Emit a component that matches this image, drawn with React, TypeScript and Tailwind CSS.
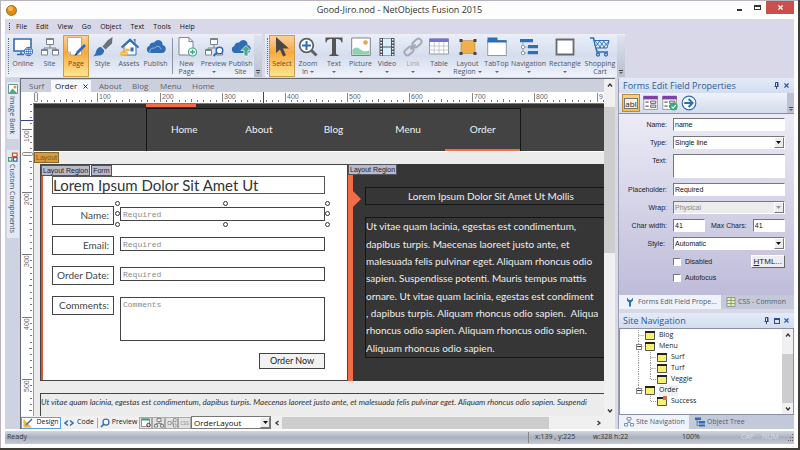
import type { ReactNode } from 'react';
import { X } from 'lucide-react';

const BLUE = '#2f6db5';
const GRAY = '#7d838c';

/* ---------- icons ---------- */

function Icon({ children, size = 20 }: { children: ReactNode; size?: number }) {
  return (
    <svg width={size} height={size} viewBox="0 0 20 20" fill="none" className="shrink-0" aria-hidden="true">
      {children}
    </svg>
  );
}

function Cloud() {
  return (
    <path
      d="M4 16a3.6 3.6 0 0 1-.6-7C3.600 6.500 6 5 8.200 5.600 9.500 3 12.500 2.200 14.700 3.800c1.600 1.100 2 2.700 1.800 4.200C18.500 8.300 19.800 9.800 19.800 12c0 2.200-1.600 4-3.800 4Z"
      fill={BLUE}
    />
  );
}

function SiteBoxes() {
  return (
    <g stroke={GRAY}>
      <path d="M10 7v4M4 13v-2h12v2" strokeWidth="1" />
      <path d="M6.500 1.500h7v6h-7zM1.500 12.500h6v5.500h-6zM12.500 12.500h6v5.500h-6z" fill="#fff" />
      <path d="M6.500 2.300h7M1.500 13.300h6M12.500 13.300h6" strokeWidth="1.500" />
    </g>
  );
}

const icons = {
  online: (
    <Icon>
      <path d="M1 2h17v12H1z" fill="#fff" stroke={BLUE} strokeWidth="1.600" />
      <path d="M4 17.500h7M8 15v2" stroke={BLUE} strokeWidth="1.500" />
      <circle cx="15.500" cy="14.500" r="4.200" fill="#fff" stroke={BLUE} />
      <path d="M11.500 14.500h8M15.500 10.500v8M12.300 12.500h6.400M12.300 16.500h6.400" stroke={BLUE} strokeWidth=".7" />
      <ellipse cx="15.500" cy="14.500" rx="2" ry="4" stroke={BLUE} strokeWidth=".7" />
    </Icon>
  ),
  site: (
    <Icon>
      <SiteBoxes />
    </Icon>
  ),
  page: (
    <Icon>
      <path d="M1.500.500h14V18h-11l-3-3z" fill="#fff" stroke="#a59b86" strokeWidth=".8" />
      <path d="M1.500 15h3v3" stroke="#a59b86" strokeWidth=".8" />
      <path d="m9.500 18 1-3.500L18 7l2 2-7.500 7.500z" fill={BLUE} />
      <path d="m8.500 19 1.500-3 1.500 1.500z" fill="#333" />
    </Icon>
  ),
  style: (
    <Icon>
      <path d="M19.500 0 19 6.500l-6.500 6-3-3L15 3z" fill="#6d7177" />
      <path d="m8 10 3 3c.5 3-2 5.500-5 5.500-2 0-4 .5-6 1 2-1.500 2.500-3 3-5C3.600 12 5.500 10 8 10Z" fill={BLUE} />
    </Icon>
  ),
  assets: (
    <Icon>
      <path d="M5 9.500 11 4l6 5.500V18H5z" fill="#fff" stroke={BLUE} />
      <path d="M14.500 2h2v5" fill={BLUE} />
      <path d="m2.500 10.500 8.500-8 8.500 8" stroke={BLUE} strokeWidth="1.800" />
      <path d="M11.500 10.500h3v4h-3z" fill={BLUE} />
      <ellipse cx="7.500" cy="13" rx="3.500" ry="1.400" fill="#f0bb57" />
      <path d="M1 15.500c0-1.500 8-1.500 8 0v2.200c0 1.600-8 1.600-8 0z" fill="#eeb04a" />
      <path d="M1 15.800c1.500 1.200 6.500 1.200 8 0" stroke="#fff0cc" strokeWidth=".6" />
    </Icon>
  ),
  publish: (
    <Icon>
      <Cloud />
      <path d="M4 16c-1-3 1.500-5.500 4.500-4.800 2-3 6-2 6.500 1" stroke="#fff" strokeWidth=".5" />
    </Icon>
  ),
  newPage: (
    <Icon>
      <path d="M2 .600h10l4 4V18H2z" fill="#fff" stroke={GRAY} />
      <path d="M12 .600v4h4" stroke={GRAY} />
      <circle cx="15.500" cy="15" r="4" fill="#fff" stroke="#45a782" strokeWidth="1.200" />
      <path d="M15.500 12.500v5M13 15h5" stroke="#45a782" strokeWidth="1.500" />
    </Icon>
  ),
  preview: (
    <Icon>
      <SiteBoxes />
      <path d="m9.500 19 4-4" stroke={BLUE} strokeWidth="2" />
      <circle cx="15.500" cy="13.500" r="3.300" fill="#fff" stroke={BLUE} strokeWidth="1.500" />
    </Icon>
  ),
  publishSite: (
    <Icon>
      <Cloud />
      <path d="m15 8.500 5 5h-3V19h-4v-5.500h-3z" fill="#4cab8c" stroke="#fff" strokeWidth=".7" />
    </Icon>
  ),
  select: (
    <Icon>
      <path d="M4 0v16l4-3.500 3 7 3-1.300-3-6.700h6z" fill="#484848" />
    </Icon>
  ),
  zoomIn: (
    <Icon>
      <path d="m13 13 5.500 5.500" stroke="#5d6168" strokeWidth="3" />
      <circle cx="8.500" cy="8.500" r="6.800" fill="#fff" stroke="#5d6168" strokeWidth="1.800" />
      <path d="M8.500 4v9M4 8.500h9" stroke={BLUE} strokeWidth="2" />
    </Icon>
  ),
  text: (
    <Icon>
      <path d="M1.500.500h17v5h-1c-.7-2.700-1.500-3.500-5.500-3.500v14c0 1.500 1 1.800 2.500 2v1h-9v-1c1.500-.2 2.500-.5 2.500-2V2C4 2 3.200 2.800 2.500 5.500h-1z" fill="#555" />
    </Icon>
  ),
  picture: (
    <Icon>
      <path d="M.700 1h18.600v17.500H.700z" fill="#fff" stroke={GRAY} />
      <circle cx="14.500" cy="5.500" r="2.300" fill="#e9a64a" />
      <path d="M1.500 13c3-3.500 5-3 8-.5s5 2 9 1v4.300h-17z" fill="#8fd0b0" />
    </Icon>
  ),
  video: (
    <Icon>
      <path d="M2.500 1h15v18h-15z" fill="#4e5258" />
      <path d="M6 1.500h8v8H6zM6 10.500h8v8H6z" fill="#d9effb" />
      <path d="M4.200 2v17M15.800 2v17" stroke="#fff" strokeWidth="1.500" strokeDasharray="1.500 1.500" />
    </Icon>
  ),
  link: (
    <Icon>
      <g stroke="#a7a8b8" strokeWidth="2">
        <rect x="9" y="3" width="10" height="6" rx="3" transform="rotate(-42 14 6)" />
        <rect x="1" y="11" width="10" height="6" rx="3" transform="rotate(-42 6 14)" />
        <path d="m7.500 12.500 5-5" />
      </g>
    </Icon>
  ),
  table: (
    <Icon>
      <path d="M.500 2h19v15H.500z" fill="#fff" stroke={GRAY} strokeWidth=".8" />
      <path d="M.500 1.500h19V5H.500z" fill="#7472c9" />
      <path d="M.500 9h19M.500 13h19M5.300 5v12M10 5v12M14.700 5v12" stroke="#b9bac9" strokeWidth=".8" />
    </Icon>
  ),
  region: (
    <Icon>
      <path d="M3 3.500h14v13H3z" fill="#eeb04f" stroke="#b3894a" strokeWidth=".6" />
      <path d="M1.500 2h3v3h-3zM15.500 2h3v3h-3zM1.500 15h3v3h-3zM15.500 15h3v3h-3z" fill="#444" />
    </Icon>
  ),
  tabTop: (
    <Icon>
      <path d="M.700 3.500h18.600v15H.700z" fill="#fff" stroke={GRAY} strokeWidth=".8" />
      <path d="M.500.500h10v2.700h9v2.300H.500z" fill={BLUE} />
    </Icon>
  ),
  navigation: (
    <Icon>
      <path d="M4 5v12M4 10h5M4 16h5" stroke="#8aa" strokeWidth=".8" />
      <path d="M1 2h13v3.200H1zM9 8h10v3.200H9zM9 14h10v3.200H9z" fill={BLUE} />
      <circle cx="4" cy="10" r="1.700" fill="#fff" stroke={GRAY} strokeWidth=".8" />
      <circle cx="4" cy="16" r="1.700" fill="#fff" stroke={GRAY} strokeWidth=".8" />
    </Icon>
  ),
  rectangle: (
    <Icon>
      <path d="M1.500 2.500h17v15h-17z" fill="#fff" stroke="#666a70" strokeWidth="1.800" />
    </Icon>
  ),
  cart: (
    <Icon>
      <path d="M0 1h3.500L7 15h11" stroke={BLUE} strokeWidth="1.600" />
      <path d="M4 3.500h15L17 11H6z" fill="#dfeaf8" stroke={BLUE} />
      <path d="m5 4 6 7m-2-7.500 6 7.500M13 3.500l4 5M10 3.500 6 9m8.500-5.500L9 11m10-7-6 7" stroke={BLUE} strokeWidth=".9" />
      <circle cx="8" cy="17.500" r="1.500" stroke={BLUE} strokeWidth="1.300" />
      <circle cx="16" cy="17.500" r="1.500" stroke={BLUE} strokeWidth="1.300" />
    </Icon>
  ),
};

function Caret() {
  return (
    <svg width="4" height="2" viewBox="0 0 4 2" aria-hidden="true">
      <path d="M0 0h4L2 2z" fill="#666" />
    </svg>
  );
}

/* ---------- toolbar ---------- */

interface Tool {
  label: string;
  second?: string;
  icon: ReactNode;
  width: string;
  active?: boolean;
  menu?: boolean;
  disabled?: boolean;
}

const mainTools: Tool[] = [
  { label: 'Online', icon: icons.online, width: 'w-[26px]' },
  { label: 'Site', icon: icons.site, width: 'w-[27px]' },
  { label: 'Page', icon: icons.page, width: 'w-[26px]', active: true },
  { label: 'Style', icon: icons.style, width: 'w-[27px]' },
  { label: 'Assets', icon: icons.assets, width: 'w-[26px]' },
  { label: 'Publish', icon: icons.publish, width: 'w-[27px]' },
];

const pageTools: Tool[] = [
  { label: 'New', second: 'Page', icon: icons.newPage, width: 'w-[27px]' },
  { label: 'Preview', icon: icons.preview, width: 'w-[27px]', menu: true },
  { label: 'Publish', second: 'Site', icon: icons.publishSite, width: 'w-[27px]' },
];

const objectTools: Tool[] = [
  { label: 'Select', icon: icons.select, width: 'w-[26px]', active: true },
  { label: 'Zoom', second: 'In', icon: icons.zoomIn, width: 'w-[26px]', menu: true },
  { label: 'Text', icon: icons.text, width: 'w-[26px]', menu: true },
  { label: 'Picture', icon: icons.picture, width: 'w-[27px]', menu: true },
  { label: 'Video', icon: icons.video, width: 'w-[26px]', menu: true },
  { label: 'Link', icon: icons.link, width: 'w-[26px]', menu: true, disabled: true },
  { label: 'Table', icon: icons.table, width: 'w-[26px]', menu: true },
  { label: 'Layout', second: 'Region', icon: icons.region, width: 'w-[31px]', menu: true },
  { label: 'TabTop', icon: icons.tabTop, width: 'w-[27px]', menu: true },
  { label: 'Navigation', icon: icons.navigation, width: 'w-[37px]', menu: true },
  { label: 'Rectangle', icon: icons.rectangle, width: 'w-[36px]', menu: true },
  { label: 'Shopping', second: 'Cart', icon: icons.cart, width: 'w-[34px]' },
];

function ToolButton({ tool }: { tool: Tool }) {
  return (
    <button
      disabled={tool.disabled}
      className={`${tool.width} flex flex-col items-center whitespace-nowrap border pt-px text-[7px] leading-[8px] ${
        tool.active
          ? 'border-[#c79c4e] bg-linear-to-b from-[#fbd09a] via-[#f9a83a] via-40% to-[#fde58c] text-[#5d4a2c]'
          : 'border-transparent'
      } ${tool.disabled ? 'text-[#a3a4b2]' : 'text-[#4f5566]'}`}
    >
      {tool.icon}
      <span className="mt-[3px]">{tool.label}</span>
      <span className="flex h-[8px] items-center gap-[2px]">
        {tool.second}
        {tool.menu && <Caret />}
      </span>
    </button>
  );
}

function Toolbar({ label, children }: { label: string; children: ReactNode }) {
  return (
    <div
      role="toolbar"
      aria-label={label}
      className="flex h-[43px] border-t border-[#eeeef6] bg-linear-to-b from-[#e9eef8] via-[#d5dded] via-50% to-[#eef2fb]"
    >
      <div className="my-[3px] ml-[2px] mr-px w-px border-l border-dotted border-[#6b7080]" />
      {children}
      <button aria-label="Toolbar options" className="flex w-[8px] flex-col items-center justify-end gap-px bg-linear-to-b from-[#dfe3ef] to-[#b9bfd0] pb-[3px]">
        <span className="h-px w-[4px] bg-[#444]" />
        <Caret />
      </button>
    </div>
  );
}

/* ---------- rulers ---------- */

const STEP = 6.24;
const rulerText = "font-['Liberation_Sans'] text-[7px]";

function HorizontalRuler() {
  const ticks = Array.from({ length: 110 }, (_, i) => i);
  return (
    <svg width="100%" height="11" className="block bg-white" aria-hidden="true">
      {ticks.map((i) => {
        const x = Math.round(2 + i * STEP);
        const top = i % 10 === 0 ? 1 : i % 5 === 0 ? 7 : 8;
        return <path key={i} d={`M${x + 0.5} ${top}V10`} stroke={i % 10 === 0 ? '#8a8a8a' : '#777'} />;
      })}
      {['100', '200', '300', '400', '500', '600', '700', '800', '9'].map((value, i) => (
        <text key={value} x={Math.round(4 + (i + 1) * 10 * STEP)} y="7" className={rulerText} fill="#666">
          {value}
        </text>
      ))}
      <rect x="1.500" y=".500" width="3" height="9" rx="1" fill="#f4f4f4" stroke="#888" />
      <path d="M230.500 0v11" stroke="#3d3f86" />
    </svg>
  );
}

function VerticalRuler() {
  const ticks = Array.from({ length: 90 }, (_, i) => i);
  return (
    <svg width="13" height="100%" className="block bg-white" aria-hidden="true">
      {ticks.map((i) => {
        const y = Math.round(i * STEP) - 37;
        const left = i % 10 === 0 ? 1 : i % 5 === 0 ? 8 : 9;
        return <path key={i} d={`M${left} ${y + 0.5}H11`} stroke="#777" />;
      })}
      {[1, 2, 3, 4, 5].map((n) => (
        <text key={n} transform={`translate(8 ${Math.round(n * 10 * STEP) - 24}) rotate(-90)`} className={rulerText} fill="#666">
          {n * 100}
        </text>
      ))}
      <rect x="1.500" y="48.500" width="10" height="3" rx="1" fill="#f4f4f4" stroke="#888" />
      <path d="M0 16.500h13" stroke="#3d3f86" />
    </svg>
  );
}

/* ---------- page being edited ---------- */

function Tag({ children, orange }: { children: ReactNode; orange?: boolean }) {
  return (
    <span
      className={`block h-[11px] whitespace-nowrap border px-px font-['Liberation_Sans'] text-[7px] leading-[9px] ${
        orange ? 'border-[#84652f] bg-[#d99c3d] text-[#7c5618]' : 'border-[#54545f] bg-[#b9b9c9] text-[#26262c]'
      }`}
    >
      {children}
    </span>
  );
}

function Handles() {
  const dot = 'absolute size-[5px] rounded-full border border-[#333] bg-white';
  return (
    <div aria-hidden="true">
      <span className={`${dot} -left-[5px] -top-[6px]`} />
      <span className={`${dot} -left-[5px] top-[4px]`} />
      <span className={`${dot} -bottom-[6px] -left-[5px]`} />
      <span className={`${dot} -top-[6px] left-1/2`} />
      <span className={`${dot} -bottom-[6px] left-1/2`} />
      <span className={`${dot} -right-[5px] -top-[6px]`} />
      <span className={`${dot} -right-[5px] top-[4px]`} />
      <span className={`${dot} -bottom-[6px] -right-[5px]`} />
    </div>
  );
}

const formFields = [
  { id: 'order-name', label: 'Name:', selected: true },
  { id: 'order-email', label: 'Email:', selected: false },
  { id: 'order-date', label: 'Order Date:', selected: false },
];

const paragraph = [
  'Ut vitae quam lacinia, egestas est condimentum,',
  'dapibus turpis. Maecenas laoreet justo ante, et',
  'malesuada felis pulvinar eget. Aliquam rhoncus odio',
  'sapien. Suspendisse potenti. Mauris tempus mattis',
  'ornare. Ut vitae quam lacinia, egestas est condiment',
  ', dapibus turpis. Aliquam rhoncus odio sapien.  Aliqua',
  'rhoncus odio sapien. Aliquam rhoncus odio sapien.',
  'Aliquam rhoncus odio sapien.',
];

const fieldLabel = 'h-[19px] w-[62px] shrink-0 border border-[#444] pr-[4px] text-right text-[10px] leading-[17px] text-[#444]';
const fieldBox = "block w-full border border-[#444] bg-white px-[2px] font-['Liberation_Mono'] text-[8px] placeholder:text-[#8a8a8a]";

function OrderForm() {
  return (
    <section className="w-[307px] shrink-0 border border-r-0 border-[#444] bg-white">
      <div className="flex h-full border-l-2 border-[#d9572f] pb-[12px]">
        <div className="-ml-[2px] w-[284px]">
          <div className="flex gap-px">
            <Tag>Layout Region</Tag>
            <Tag>Form</Tag>
          </div>
          <form className="ml-[11px] flex flex-col">
            <h1 className="mb-[12px] h-[18px] border border-[#555] text-[15px] leading-[16px] text-[#333]">
              Lorem Ipsum Dolor Sit Amet Ut
            </h1>
            {formFields.map((f) => (
              <div key={f.id} className="mb-[11px] flex gap-[6px]">
                <label htmlFor={f.id} className={fieldLabel}>
                  {f.label}
                </label>
                <div className="relative mt-px h-[14px] flex-1">
                  <input id={f.id} placeholder="Required" className={`${fieldBox} h-[14px]`} />
                  {f.selected && <Handles />}
                </div>
              </div>
            ))}
            <div className="flex gap-[6px]">
              <label htmlFor="order-comments" className={fieldLabel}>
                Comments:
              </label>
              <div className="mt-px flex-1">
                <textarea id="order-comments" placeholder="Comments" className={`${fieldBox} h-[44px] resize-none pt-[2px] leading-[9px]`} />
              </div>
            </div>
            <button type="button" className="mt-[12px] h-[16px] w-[66px] self-end border border-[#444] bg-[#f2f2f2] text-[9px] leading-[14px] text-[#222]">
              Order Now
            </button>
          </form>
        </div>
      </div>
    </section>
  );
}

function PageCanvas() {
  return (
    <div className="min-w-0 flex-1 overflow-hidden bg-[#ececec] font-['Lato',sans-serif]">
      <div className="h-[4px] bg-[#303030] pl-[112px]">
        <div className="h-[3px] w-[50px] bg-[#f26c45]" />
      </div>
      <div className="bg-[#434343] pl-[112px]">
        <nav className="grid w-[375px] grid-cols-5 border border-b-0 border-[#151515]">
          {['Home', 'About', 'Blog', 'Menu', 'Order'].map((item) => (
            <a
              key={item}
              href="#"
              className={`h-[42px] border-b-2 text-center text-[10px] leading-[41px] text-[#f1f1f1] ${
                item === 'Order' ? 'border-[#f26c45]' : 'border-[#434343]'
              }`}
            >
              {item}
            </a>
          ))}
        </nav>
      </div>
      <div className="flex h-[13px] border-t border-white">
        <Tag orange>Layout</Tag>
      </div>
      <div className="ml-[6px] flex h-[217px]">
        <OrderForm />
        <section className="min-w-0 flex-1 border-l border-[#444] bg-[#363636] text-[#eee]">
          <div className="flex h-full">
            <div className="relative w-[5px] shrink-0 bg-[#f26c45]">
              <div className="flex">
                <Tag>Layout Region</Tag>
              </div>
              <svg width="8" height="16" viewBox="0 0 8 16" className="absolute left-[5px] top-[27px]" aria-hidden="true">
                <path d="M0 0l8 8-8 8z" fill="#f26c45" />
              </svg>
            </div>
            <div className="ml-[12px] mt-[23px] min-w-0 flex-1">
              <h2 className="mb-[12px] h-[18px] whitespace-nowrap border border-r-0 border-[#151515] pl-[42px] text-[10px] leading-[16px]">
                Lorem Ipsum Dolor Sit Amet Ut Mollis
              </h2>
              <div className="grid h-[141px] auto-rows-fr items-center overflow-hidden whitespace-pre border border-r-0 border-[#151515] text-[10px] leading-[17px]">
                {paragraph.map((line) => (
                  <p key={line}>{line}</p>
                ))}
              </div>
            </div>
          </div>
        </section>
      </div>
      <footer className="ml-[6px] mt-[12px] h-[60px] overflow-hidden whitespace-nowrap border-l border-t border-[#444] text-[8px] italic leading-[17px] text-[#333]">
        Ut vitae quam lacinia, egestas est condimentum, dapibus turpis. Maecenas laoreet justo ante, et malesuada felis pulvinar eget. Aliquam rhoncus odio sapien. Suspendi
      </footer>
    </div>
  );
}

/* ---------- document area ---------- */

function Chevron({ d, label }: { d: string; label: string }) {
  return (
    <button aria-label={label} className="flex size-[11px] shrink-0 items-center justify-center">
      <svg width="6" height="6" viewBox="0 0 6 6" fill="none" stroke="#333" strokeWidth="1.300" aria-hidden="true">
        <path d={d} />
      </svg>
    </button>
  );
}

const UP = 'M1 4.500 3 2l2 2.500';
const DOWN = 'M1 1.500 3 4l2-2.500';
const LEFT = 'M4.500 1 2 3l2.500 2';
const RIGHT = 'M1.500 1 4 3 1.500 5';

function ViewBar() {
  const iconButton = 'flex h-[12px] w-[13px] items-center justify-center border border-[#a9a9a9] bg-[#e2e2e2]';
  return (
    <div className="flex h-[13px] items-center bg-[#f0f0f0] text-[7px] text-[#222]">
      <button className="flex h-[12px] w-[40px] items-center justify-center gap-[3px] border border-[#5a9fdb] bg-white">
        <Icon size={10}>
          <path d="M1 2v17h17z" fill="#ecb04f" />
          <path d="m5 15 2-4L17 1l2 2L9 13z" fill={BLUE} />
        </Icon>
        Design
      </button>
      <button className="flex w-[36px] items-center justify-center gap-[3px]">
        <Icon size={10}>
          <path d="m8 5-6 5 6 5M12 5l6 5-6 5" stroke={BLUE} strokeWidth="3" />
        </Icon>
        Code
      </button>
      <button className="flex h-[10px] w-[42px] items-center justify-center gap-[2px] border-l border-[#aaa]">
        <Icon size={10}>
          <path d="m2 18 6-6" stroke={BLUE} strokeWidth="3.500" />
          <circle cx="12" cy="8" r="6" fill="#fff" stroke={BLUE} strokeWidth="2.500" />
        </Icon>
        Preview
      </button>
      <button aria-label="Page settings" className={iconButton}>
        <Icon size={10}>
          <path d="M1 2h16v15H1z" fill="#fff" stroke="#777" strokeWidth="1.500" />
          <path d="M1 1h16v4H1z" fill="#3c9c81" />
          <circle cx="15" cy="14" r="3.500" fill="#ddd" stroke="#444" strokeWidth="2" />
        </Icon>
      </button>
      <button aria-label="Site structure" className={iconButton}>
        <Icon size={10}>
          <path d="M10 7v4M4 13v-2h12v2" stroke="#777" strokeWidth="1.500" />
          <path d="M6 1h8v6H6zM1 13h6v5H1zM13 13h6v5h-6z" fill="#eee" stroke="#777" strokeWidth="1.800" />
        </Icon>
      </button>
      <button aria-label="Object tree" className={iconButton}>
        <Icon size={10}>
          <path d="M8 10h4V4h2M12 10v6h2" stroke="#888" strokeWidth="1.500" />
          <path d="M2 7h6v6H2zM13 1h5v6h-5zM13 12h5v6h-5z" fill="#eee" stroke="#888" strokeWidth="1.500" />
        </Icon>
      </button>
      <button className="h-[12px] w-[13px] border border-[#a9a9a9] bg-[#e2e2e2] text-[5px] leading-[10px] text-[#888]">CSS</button>
      <div className="relative w-[80px]">
        <select aria-label="Layout" className="block h-[13px] w-full appearance-none border border-[#777] bg-white pl-[2px] text-[8px] font-medium leading-[10px] text-[#111]">
          <option>OrderLayout</option>
        </select>
        <DropArrow />
      </div>
      <div className="flex flex-1 items-center bg-[#f0f0f0]">
        <Chevron d={LEFT} label="Scroll left" />
        <div className="flex h-[12px] flex-1">
          <div className="w-[86%] bg-[#cdcdcd]" />
        </div>
        <Chevron d={RIGHT} label="Scroll right" />
      </div>
      <div className="w-[11px]" />
    </div>
  );
}

function DropArrow({ disabled }: { disabled?: boolean }) {
  return (
    <span className="pointer-events-none absolute bottom-px right-px top-px flex w-[10px] items-center justify-center border border-b-[#777] border-l-white border-r-[#777] border-t-white bg-[#ededed]">
      <svg width="5" height="3" viewBox="0 0 5 3" aria-hidden="true">
        <path d="M0 0h5L2.500 3z" fill={disabled ? '#999' : '#111'} />
      </svg>
    </span>
  );
}

function DocumentArea() {
  return (
    <main className="flex min-w-0 flex-1 flex-col border-l border-t border-[#666a78] bg-[#ccd0dd]">
      <div className="flex min-h-0 flex-1">
        <div className="flex min-w-0 flex-1 flex-col">
          <div role="tablist" className="flex h-[13px] items-end pl-[8px] text-[8px] leading-[12px] text-[#5b6070]">
            <button role="tab" className="w-[22px] text-left">Surf</button>
            <button role="tab" aria-selected="true" className="flex h-[12px] w-[40px] items-center justify-between bg-[#f4f7fd] pl-[4px] pr-[2px] text-[#222]">
              Order
              <X size={7} strokeWidth={3} className="shrink-0" />
            </button>
            <button role="tab" className="ml-[8px] w-[33px] text-left">About</button>
            <button role="tab" className="w-[28px] text-left">Blog</button>
            <button role="tab" className="w-[32px] text-left">Menu</button>
            <button role="tab" className="text-left">Home</button>
          </div>
          <div className="flex h-[12px] bg-white">
            <div className="w-[12px]" />
            <div className="flex-1 overflow-hidden border-b border-[#777]">
              <HorizontalRuler />
            </div>
          </div>
          <div className="flex min-h-0 flex-1">
            <div className="w-[13px] shrink-0 overflow-hidden border-r border-[#999]">
              <VerticalRuler />
            </div>
            <PageCanvas />
          </div>
        </div>
        <div className="flex w-[11px] flex-col bg-[#f0f0f0]">
          <Chevron d={UP} label="Scroll up" />
          <div className="flex-1 pt-[17px]">
            <div className="h-[49%] bg-[#cdcdcd]" />
          </div>
          <Chevron d={DOWN} label="Scroll down" />
        </div>
      </div>
      <ViewBar />
    </main>
  );
}

/* ---------- side panels ---------- */

function Pin() {
  return (
    <svg width="7" height="7" viewBox="0 0 7 7" stroke="#2c4a86" fill="none" aria-hidden="true">
      <path d="M1.500 4.500h4M2.500 4V.500h2.500V4M4.500 1v3M3.500 5v2" />
    </svg>
  );
}

function PanelTitle({ title, maximize }: { title: string; maximize?: boolean }) {
  return (
    <div className="flex h-[15px] shrink-0 items-center bg-linear-to-b from-[#e4ebf7] to-[#d3ddef] px-[4px] text-[#2f5a9c]">
      <h2 className="flex-1 text-[9px] leading-[14px]">{title}</h2>
      <button aria-label="Pin"><Pin /></button>
      {maximize && (
        <button aria-label="Maximize" className="ml-[4px] size-[6px] border border-t-2 border-[#2c4a86]" />
      )}
      <button aria-label="Close" className="ml-[3px]"><X size={7} strokeWidth={4} /></button>
    </div>
  );
}

const inset = 'block w-full border border-b-white border-l-[#777] border-r-white border-t-[#777] bg-white pl-px text-[7px] leading-[10px] text-[#111]';

function Picker({ id, value, disabled }: { id: string; value: string; disabled?: boolean }) {
  return (
    <div className="relative col-span-3">
      <select id={id} disabled={disabled} className={`${inset} h-[13px] appearance-none ${disabled ? 'bg-[#ececec]! text-[#888]!' : ''}`}>
        <option>{value}</option>
      </select>
      <DropArrow disabled={disabled} />
    </div>
  );
}

function FormIcon({ check }: { check?: boolean }) {
  return (
    <Icon size={16}>
      <path d="M1 2h17v16H1z" fill="#fff" stroke="#888" />
      <path d="M.500 1h18v4.500H.500z" fill="#7d3fa8" />
      <path d="M3 9h4M3 14h4" stroke="#666" strokeWidth="1.500" />
      <path d="M9.500 7.500h6.500v3H9.500zM9.500 12.500h6.500v3H9.500z" fill="#ddd" stroke="#555" />
      {check && (
        <>
          <circle cx="14.500" cy="14.500" r="5" fill="#43a57f" />
          <path d="m12 14.500 2 2 3.200-4" stroke="#fff" strokeWidth="1.500" />
        </>
      )}
    </Icon>
  );
}

function FieldProperties() {
  return (
    <section className="flex flex-col">
      <PanelTitle title="Forms Edit Field Properties" />
      <div className="flex h-[21px] items-center gap-[3px] border-b border-[#8b8fa5] bg-linear-to-b from-[#eef2fa] to-[#d3dcec] pl-[3px]">
        <button className="h-[18px] w-[18px] border border-[#b98a3c] bg-linear-to-b from-[#fbce8b] to-[#fbb94c] px-px">
          <span className="block border border-[#777] bg-[#f6f1e6] text-[8px] leading-[9px] text-[#222]">abI</span>
        </button>
        <button aria-label="Form settings"><FormIcon /></button>
        <button aria-label="Form validation"><FormIcon check /></button>
        <button aria-label="Submit action">
          <Icon size={16}>
            <circle cx="10" cy="10" r="8.500" fill="#fff" stroke={BLUE} strokeWidth="1.500" />
            <path d="M4 10h10M9.500 5l5 5-5 5" stroke={BLUE} strokeWidth="2.500" />
          </Icon>
        </button>
        <button aria-label="Toolbar options" className="ml-auto flex h-full w-[7px] flex-col items-center justify-end gap-px bg-[#bcc2d2] pb-[2px]">
          <span className="h-px w-[4px] bg-[#444]" />
          <Caret />
        </button>
      </div>
      <form className="grid h-[181px] grid-cols-[48px_32px_1fr_32px] content-start gap-x-[6px] gap-y-[5px] bg-linear-to-b from-[#ecebf6] to-[#bebcd9] pr-[12px] pt-[4px] font-['Liberation_Sans'] text-[7px] leading-[13px] text-[#222]">
        <label htmlFor="p-name" className="text-right">Name:</label>
        <div className="col-span-3"><input id="p-name" defaultValue="name" className={`${inset} h-[13px]`} /></div>
        <label htmlFor="p-type" className="text-right">Type:</label>
        <Picker id="p-type" value="Single line" />
        <label htmlFor="p-text" className="text-right">Text:</label>
        <div className="col-span-3"><textarea id="p-text" className={`${inset} h-[24px] resize-none`} /></div>
        <label htmlFor="p-placeholder" className="text-right">Placeholder:</label>
        <div className="col-span-3"><input id="p-placeholder" defaultValue="Required" className={`${inset} h-[13px]`} /></div>
        <label htmlFor="p-wrap" className="text-right">Wrap:</label>
        <Picker id="p-wrap" value="Physical" disabled />
        <label htmlFor="p-width" className="whitespace-nowrap text-right">Char width:</label>
        <input id="p-width" defaultValue="41" className={`${inset} h-[13px]`} />
        <label htmlFor="p-max" className="whitespace-nowrap text-right">Max Chars:</label>
        <input id="p-max" defaultValue="41" className={`${inset} h-[13px]`} />
        <label htmlFor="p-style" className="pr-[2px] text-right">Style:</label>
        <Picker id="p-style" value="Automatic" />
        <div className="col-span-3 col-start-2 flex items-start justify-between">
          <div className="flex flex-col gap-[3px]">
            {['Disabled', 'Autofocus'].map((name) => (
              <label key={name} className="flex items-center gap-[4px]">
                <input type="checkbox" className={`${inset} size-[8px]! appearance-none`} />
                {name}
              </label>
            ))}
          </div>
          <button type="button" className="h-[13px] w-[34px] border border-b-[#666] border-l-white border-r-[#666] border-t-white bg-[#eeeef2] text-[8px] leading-[11px]">
            <u>H</u>TML...
          </button>
        </div>
      </form>
      <div role="tablist" className="flex h-[14px] bg-[#c4c9d9] text-[7px] text-[#555b6d]">
        <button role="tab" aria-selected="true" className="flex w-[102px] items-center gap-[3px] bg-[#eef2fa] pl-[6px]">
          <Icon size={10}>
            <path d="M4 1v6l4 4v8h4v-8l4-4V1l-4 5H8z" fill={BLUE} />
          </Icon>
          Forms Edit Field Prope...
        </button>
        <button role="tab" className="flex items-center gap-[2px] pl-[5px]">
          <Icon size={10}>
            <path d="M2 1h16v18H2z" fill="#f6e9a0" stroke="#6b86b0" strokeWidth="1.500" />
            <path d="M2 7h16M2 13h16M10 1v18" stroke="#5e9a78" strokeWidth="1.500" />
          </Icon>
          CSS - Common
        </button>
      </div>
    </section>
  );
}

interface TreeNode {
  name: string;
  child?: boolean;
  expanded?: boolean;
  last?: boolean;
  flagged?: boolean;
}

const treeNodes: TreeNode[] = [
  { name: 'Blog' },
  { name: 'Menu', expanded: true },
  { name: 'Surf', child: true },
  { name: 'Turf', child: true },
  { name: 'Veggie', child: true },
  { name: 'Order', expanded: true, last: true },
  { name: 'Success', child: true, last: true, flagged: true },
];

function TreeRow({ node }: { node: TreeNode }) {
  const lines = { stroke: '#999', strokeDasharray: '1 1' };
  return (
    <li className="flex h-[11px] items-center gap-[4px]">
      <span className="flex">
        <svg width={node.child ? 24 : 12} height="11" aria-hidden="true">
          {!node.last && <path d="M5.500 0v11" {...lines} />}
          {node.name === 'Order' && <path d="M5.500 0v5" {...lines} />}
          {node.child ? (
            <path d={node.name === 'Veggie' || node.last ? 'M17.500 0v5.500h6' : 'M17.500 0v11M17.500 5.500h6'} fill="none" {...lines} />
          ) : (
            <path d="M5.500 5.500h6" {...lines} />
          )}
          {node.expanded && (
            <>
              <rect x="3.500" y="3.500" width="5" height="5" fill="#fff" stroke="#888" />
              <path d="M4 5.500h4" stroke="#444" />
            </>
          )}
        </svg>
        <svg width="10" height="11" viewBox="0 0 10 11" aria-hidden="true">
          <path d="M.500 1.500h9v8h-9z" fill="#f8f071" stroke="#555" />
          <path d="M0 1h10v2H0z" fill="#222" />
          {node.flagged && <path d="M6 0h4v4H6z" fill="#d86b50" />}
        </svg>
      </span>
      <span className={node.name === 'Order' ? 'bg-[#f0f0f0]' : ''}>{node.name}</span>
    </li>
  );
}

function SiteNavigation() {
  return (
    <section className="mt-[4px] flex min-h-0 flex-1 flex-col">
      <PanelTitle title="Site Navigation" maximize />
      <div className="flex min-h-0 flex-1 border border-[#8b8fa5] bg-white">
        <ul className="flex-1 overflow-hidden pl-[13px] pt-px text-[7px] text-[#222]">
          {treeNodes.map((node) => (
            <TreeRow key={node.name} node={node} />
          ))}
        </ul>
        <div className="flex w-[11px] flex-col bg-[#f0f0f0]">
          <Chevron d={UP} label="Scroll up" />
          <div className="flex flex-1 items-end">
            <div className="h-[78%] w-full bg-[#cdcdcd]" />
          </div>
          <Chevron d={DOWN} label="Scroll down" />
        </div>
      </div>
      <div role="tablist" className="flex h-[14px] shrink-0 bg-[#c4c9d9] text-[7px] text-[#555b6d]">
        <button role="tab" aria-selected="true" className="flex w-[70px] items-center gap-[2px] bg-[#eef2fa] pl-[5px]">
          <Icon size={10}>
            <path d="M10 6v4M3 14l7-4 7 4" stroke="#56759f" strokeWidth="1.500" />
            <path d="M6 1h8v5H6zM1 13h6v5H1zM13 13h6v5h-6z" fill="#fff" stroke="#56759f" strokeWidth="1.500" />
          </Icon>
          Site Navigation
        </button>
        <button role="tab" className="flex items-center gap-[2px] pl-[6px]">
          <Icon size={10}>
            <path d="M0 1h12v5H0zM8 8h12v5H8zM8 15h12v4H8z" fill={BLUE} />
            <path d="M4 6v11h4M4 10h4" stroke={BLUE} strokeWidth="1.500" />
          </Icon>
          Object Tree
        </button>
      </div>
    </section>
  );
}

/* ---------- window ---------- */

function SideRail() {
  const item = 'flex w-[12px] flex-col items-center gap-[2px] bg-[#e3eaf4] pt-[2px] text-[7px] leading-[11px] text-[#444a5c]';
  return (
    <aside className="flex w-[15px] shrink-0 flex-col items-center gap-[11px] bg-[#cfd3e1] pt-[4px]">
      <button className={`${item} h-[57px]`}>
        <Icon size={10}>
          <path d="M1 1h18v18H1z" fill="#fff" stroke="#6a9a8c" strokeWidth="2" />
          <path d="m2 18 7-9 9 9z" fill="#4ea88a" />
          <circle cx="14" cy="6" r="3" fill="#e6963a" />
        </Icon>
        <span className="whitespace-nowrap [writing-mode:vertical-rl]">Image Bank</span>
      </button>
      <button className={`${item} h-[88px]`}>
        <Icon size={10}>
          <path d="M9 2h9v7H9z" fill="#fff" stroke="#d0532f" strokeWidth="2.500" />
          <path d="M1 11h7v7H1z" fill="#fff" stroke="#3f9e6e" strokeWidth="2.500" />
          <path d="M11 11h7v7h-7z" fill="#fff" stroke={BLUE} strokeWidth="2.500" />
        </Icon>
        <span className="whitespace-nowrap [writing-mode:vertical-rl]">Custom Components</span>
      </button>
    </aside>
  );
}

export default function App() {
  return (
    <div className="h-screen overflow-hidden bg-[#3f3d38] pb-[2px] pr-[2px] font-['Open_Sans',sans-serif]">
      <div className="flex h-full flex-col border-l border-t border-[#b9b3bd] bg-[#fdfdfd] pb-[4px] pl-[4px] pr-[4px]">
        {/* Title bar */}
        <header className="grid h-[18px] shrink-0 grid-cols-[1fr_auto_1fr] items-center">
          <svg width="11" height="11" viewBox="0 0 11 11" className="ml-px" aria-hidden="true">
            <circle cx="5.500" cy="5.500" r="5" fill="#e08a12" stroke="#8a5a1a" strokeWidth=".8" />
            <circle cx="4.500" cy="3.800" r="2.500" fill="#f8b84b" />
          </svg>
          <h1 className="text-[9px] leading-[18px] text-[#333]">Good-Jiro.nod - NetObjects Fusion 2015</h1>
          <div className="flex h-[13px] items-center self-start justify-self-end">
            <button aria-label="Minimize" className="mr-[12px] mt-[4px] h-[2px] w-[5px] bg-[#333]" />
            <button aria-label="Maximize" className="mr-[5px] h-[5px] w-[7px] border border-t-2 border-[#333]" />
            <button aria-label="Close" className="flex h-full w-[28px] items-center justify-center bg-[#c9504c] text-white">
              <X size={7} strokeWidth={4} />
            </button>
          </div>
        </header>

        {/* Menu */}
        <nav className="flex h-[15px] shrink-0 items-center bg-[#d9d8e8] pl-[4px] text-[7px] leading-[15px] text-[#111]">
          <span className="mr-[6px] h-[7px] border-l border-dotted border-[#333]" />
          {['File', 'Edit', 'View', 'Go', 'Object', 'Text', 'Tools', 'Help'].map((item) => (
            <button key={item} className="mr-[9px]">{item}</button>
          ))}
        </nav>

        <div className="flex shrink-0 gap-[3px] bg-[#d9d8e8] pb-px pl-px">
          <Toolbar label="Site tools">
            {mainTools.map((t) => <ToolButton key={t.label} tool={t} />)}
            <span className="my-[3px] ml-[3px] w-px bg-[#8c93a6]" />
            {pageTools.map((t) => <ToolButton key={t.label} tool={t} />)}
          </Toolbar>
          <Toolbar label="Object tools">
            {objectTools.map((t) => <ToolButton key={t.label} tool={t} />)}
          </Toolbar>
        </div>

        <div className="flex min-h-0 flex-1 bg-[#d9d8e8]">
          <SideRail />
          <DocumentArea />
          <aside className="ml-[3px] flex w-[176px] shrink-0 flex-col border-l border-[#9a9db0]">
            <FieldProperties />
            <SiteNavigation />
          </aside>
        </div>

        {/* Status bar */}
        <footer className="mt-[2px] flex h-[13px] shrink-0 items-center bg-linear-to-b from-[#d3d6de] via-[#a9b0bf] to-[#c6cad4] pl-[2px] text-[7px] text-[#333]">
          <span className="flex-1">Ready</span>
          <span className="w-[65px] border-l border-[#888] pl-[6px]">x:139 , y:225</span>
          <span className="w-[89px]">w:328 h:22</span>
          <span className="w-[59px]">100%</span>
          <span className="w-[21px] text-[#d9dce4]">CAP</span>
          <span className="w-[24px] text-[#d9dce4]">NUM</span>
          <svg width="8" height="8" viewBox="0 0 8 8" fill="#666" aria-hidden="true">
            <path d="M6 0h1v1H6zM4 3h1v1H4zM6 3h1v1H6zM2 6h1v1H2zM4 6h1v1H4zM6 6h1v1H6z" />
          </svg>
        </footer>
      </div>
    </div>
  );
}
